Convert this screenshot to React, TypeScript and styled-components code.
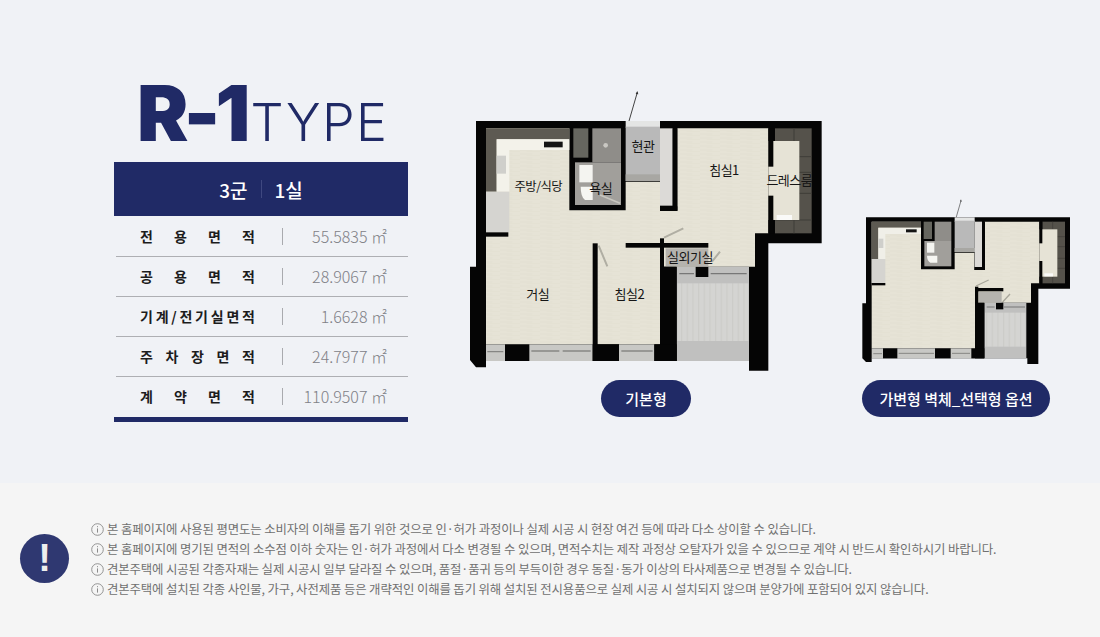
import React from "react";
import styled, { createGlobalStyle } from "styled-components";

const Global = createGlobalStyle`
  html, body { margin: 0; padding: 0; }
  body { width: 1100px; height: 637px; overflow: hidden; background: #f5f5f5; font-family: "Noto Sans CJK KR", "Noto Sans", sans-serif; }
`;

const Page = styled.div`
  width: 1100px;
  height: 637px;
  display: flex;
  flex-direction: column;
`;
const Top = styled.section`
  height: 483px;
  box-sizing: border-box;
  background: #f0f2f6;
  padding: 85px 0 0 114px;
  display: flex;
  align-items: flex-start;
`;
const Summary = styled.div`
  width: 294px;
  flex: none;
`;
const Title = styled.h1`
  margin: 0 0 21px;
  padding-left: 23px;
  height: 56px;
  line-height: 56px;
  display: flex;
  align-items: baseline;
  color: #202a66;
  font-family: Inter, "Liberation Sans", sans-serif;
  font-weight: 400;
  white-space: nowrap;
`;
const TitleBold = styled.span`
  font-size: 77px;
  font-weight: 900;
  letter-spacing: -4.8px;
`;
const TitleThin = styled.span`
  font-size: 52px;
  font-weight: 300;
  letter-spacing: 1.4px;
  margin-left: 5px;
`;
const Head = styled.div`
  height: 54px;
  background: #202a66;
  color: #fff;
  display: flex;
  align-items: center;
  justify-content: center;
  font-size: 19px;
  font-weight: 500;
`;
const HeadSep = styled.i`
  width: 1px;
  height: 18px;
  background: #3f4880;
  margin: 0 13px;
`;
const Table = styled.div`
  border-bottom: 5px solid #202a66;
  padding-top: 1px;
`;
const Row = styled.div`
  height: 40px;
  margin-left: 2px;
  box-sizing: border-box;
  display: flex;
  align-items: center;
  border-bottom: ${p => (p.$last ? "0" : "1px solid #aeafb3")};
  padding: 0 0 ${p => (p.$last ? "2px" : "1px")} 24px;
`;
const Label = styled.div`
  width: 115px;
  display: flex;
  justify-content: space-between;
  font-size: 14px;
  font-weight: 700;
  color: #1c1c1c;
`;
const Value = styled.div`
  flex: 1;
  margin-left: 27px;
  margin-right: 21px;
  height: 17px;
  line-height: 17px;
  border-left: 1px solid #a9aaae;
  text-align: right;
  color: #808187;
  font-size: 16px;
  font-weight: 300;
  white-space: nowrap;
`;
const PlanColumn = styled.div`
  flex: none;
  display: flex;
  flex-direction: column;
  align-items: center;
  margin-left: ${p => p.$left}px;
  margin-top: ${p => p.$top}px;
`;
const PlanSvg = styled.svg`
  display: block;
  font-family: "Noto Sans CJK KR", sans-serif;
`;
const Pill = styled.div`
  margin-top: 5px;
  height: 37px;
  width: ${p => p.$w}px;
  border-radius: 19px;
  background: #202a66;
  color: #fff;
  font-size: 15px;
  font-weight: 500;
  display: flex;
  align-items: center;
  justify-content: center;
  white-space: nowrap;
`;
const Notice = styled.section`
  flex: 1;
  background: #f5f5f5;
  display: flex;
  padding: 36px 0 0 20px;
`;
const Bang = styled.div`
  width: 49px;
  height: 49px;
  margin-top: 15px;
  border-radius: 50%;
  background: #2f3871;
  color: #eeeeee;
  font-family: "Liberation Sans", sans-serif;
  font-weight: 700;
  font-size: 38px;
  display: flex;
  align-items: center;
  justify-content: center;
  flex: none;
`;
const Lines = styled.div`
  margin-left: 22px;
`;
const Line = styled.p`
  margin: 0;
  height: 20px;
  line-height: 20px;
  font-size: 12.4px;
  letter-spacing: -0.12px;
  color: #707070;
  white-space: nowrap;
`;
const InfoSvg = styled.svg`
  vertical-align: -2px;
  margin-right: 3px;
`;

const rows: [string[], string][] = [
  [["전", "용", "면", "적"], "55.5835 ㎡"],
  [["공", "용", "면", "적"], "28.9067 ㎡"],
  [["기", "계", "/", "전", "기", "실", "면", "적"], "1.6628 ㎡"],
  [["주", "차", "장", "면", "적"], "24.7977 ㎡"],
  [["계", "약", "면", "적"], "110.9507 ㎡"],
];

const notes = [
  "본 홈페이지에 사용된 평면도는 소비자의 이해를 돕기 위한 것으로 인·허가 과정이나 실제 시공 시 현장 여건 등에 따라 다소 상이할 수 있습니다.",
  "본 홈페이지에 명기된 면적의 소수점 이하 숫자는 인·허가 과정에서 다소 변경될 수 있으며, 면적수치는 제작 과정상 오탈자가 있을 수 있으므로 계약 시 반드시 확인하시기 바랍니다.",
  "견본주택에 시공된 각종자재는 실제 시공시 일부 달라질 수 있으며, 품절·품귀 등의 부득이한 경우 동질·동가 이상의 타사제품으로 변경될 수 있습니다.",
  "견본주택에 설치된 각종 사인물, 가구, 사전제품 등은 개략적인 이해를 돕기 위해 설치된 전시용품으로 실제 시공 시 설치되지 않으며 분양가에 포함되어 있지 않습니다.",
];

const Wood = ({ id }: { id: string }) => (
  <defs>
    <pattern id={id} width="60" height="12" patternUnits="userSpaceOnUse">
      <rect width="60" height="12" fill="#e6e3d6" />
      <path d="M0 3h38M20 8h40" stroke="#e0ddcf" strokeWidth="1.5" />
    </pattern>
    <pattern id={id + "s"} width="17" height="12" patternUnits="userSpaceOnUse">
      <rect width="17" height="12" fill="#d4d4d2" />
      <path d="M2 0v12" stroke="#c4c4c2" strokeWidth="2" />
    </pattern>
  </defs>
);

const Room = ({ x, y, t, s = 39 }: { x: number; y: number; t: string; s?: number }) => (
  <text x={x} y={y} fontSize={s} fill="#151515" textAnchor="middle" letterSpacing={-1.5}>{t}</text>
);

const PlanBasic = () => (
  <PlanSvg width="372" height="290" viewBox="0 0 1116 870">
    <Wood id="w1" />
    <path d="M505 115L532 22" stroke="#444" strokeWidth="3" />
    <path d="M532 18l-5 9 8 1z" fill="#333" />
    <path d="M48 108H1085V475H925V857H867V828H78V847H48L30 825V545H48Z" fill="#050505" />
    <path d="M78 130H328V376H497V290H600V378H652V130H925V445H885V545H612V778H78Z" fill="url(#w1)" />
    <path d="M78 130H328V163H110V320H78Z" fill="#5d5a52" />
    <path d="M110 163H328V195H148V320H110Z" fill="#f3f2ea" />
    <rect x="252" y="170" width="56" height="17" fill="#141414" />
    <rect x="110" y="212" width="28" height="54" fill="#cfcfcb" />
    <rect x="78" y="320" width="70" height="122" fill="#d5d4d0" />
    <rect x="78" y="442" width="67" height="13" fill="#050505" />
    <rect x="340" y="130" width="45" height="88" fill="#66665f" />
    <rect x="397" y="130" width="86" height="102" fill="#8f8d89" />
    <circle cx="437" cy="181" r="7" fill="#c9c7c2" />
    <rect x="345" y="232" width="138" height="128" fill="#a19f9b" />
    <rect x="358" y="240" width="40" height="52" fill="#f4f4f0" />
    <path d="M362 305H398V345H375Q362 335 362 305Z" fill="#f6f6f2" />
    <path d="M420 330L480 355" stroke="#c8c6be" strokeWidth="5" />
    <rect x="497" y="108" width="103" height="20" fill="#e4e5e4" />
    <rect x="497" y="125" width="103" height="163" fill="#b9b9b9" />
    <rect x="497" y="268" width="103" height="20" fill="#a8a7a3" />
    <rect x="600" y="130" width="38" height="232" fill="#dcdad7" />
    <rect x="638" y="130" width="14" height="246" fill="#050505" />
    <rect x="600" y="364" width="52" height="14" fill="#050505" />
    <rect x="945" y="130" width="110" height="315" fill="#55524b" />
    <path d="M1002 130v38M1002 405v40M945 405H1055M1018 215H1055M1018 262H1055M1018 325H1055" stroke="#3f3d38" strokeWidth="3" />
    <rect x="925" y="168" width="93" height="237" fill="#e6e3d6" />
    <rect x="925" y="130" width="15" height="115" fill="#050505" />
    <rect x="925" y="332" width="15" height="113" fill="#050505" />
    <rect x="950" y="390" width="46" height="15" fill="#fafaf8" />
    <rect x="650" y="545" width="217" height="283" fill="#c0c0bf" />
    <rect x="652" y="595" width="213" height="173" fill="url(#w1s)" />
    <path d="M658 566H702M752 566H860" stroke="#777" strokeWidth="4" />
    <rect x="707" y="545" width="38" height="31" fill="#050505" />
    <rect x="617" y="490" width="128" height="55" fill="#b5b3ae" />
    <rect x="398" y="475" width="15" height="353" fill="#050505" />
    <rect x="497" y="474" width="248" height="14" fill="#050505" />
    <rect x="600" y="460" width="12" height="100" fill="#050505" />
    <rect x="600" y="545" width="50" height="283" fill="#050505" />
    <rect x="78" y="778" width="320" height="50" fill="#c8c8c5" />
    <rect x="477" y="778" width="106" height="50" fill="#c8c8c5" />
    <path d="M82 800H130M214 798H298M308 798H392M484 798H578" stroke="#868684" strokeWidth="4" />
    <rect x="135" y="778" width="73" height="50" fill="#050505" />
    <rect x="398" y="778" width="79" height="50" fill="#050505" />
    <rect x="583" y="778" width="67" height="50" fill="#050505" />
    <path d="M416 482L442 544M612 458L670 430M756 530L780 500" stroke="#b0aea3" strokeWidth="6" />
    <Room x={235} y={318} t="주방/식당" s={37} />
    <Room x={422} y={324} t="욕실" />
    <Room x={549} y={197} t="현관" />
    <Room x={792} y={270} t="침실1" />
    <Room x={988} y={300} t="드레스룸" />
    <Room x={690} y={530} t="실외기실" />
    <Room x={233} y={642} t="거실" />
    <Room x={508} y={642} t="침실2" />
  </PlanSvg>
);

const PlanOption = () => (
  <PlanSvg width="228" height="185" viewBox="-24 0 684 555">
    <Wood id="w2" />
    <path d="M318 84L333 32" stroke="#444" strokeWidth="2" />
    <path d="M333 28l-3 6 5 1z" fill="#333" />
    <path d="M48 82H660V296H565V522H532V505H65V516H48L37 505V340H48Z" fill="#050505" />
    <path d="M65 95H213V238H314V188H373V240H404V95H568V280H543V338H387V475H65Z" fill="url(#w2)" />
    <path d="M65 95H213V113H85V207H65Z" fill="#5d5a52" />
    <path d="M85 113H213V132H106V207H85Z" fill="#f0efe8" />
    <rect x="168" y="118" width="32" height="9" fill="#141414" />
    <rect x="85" y="146" width="15" height="28" fill="#cfcfcb" />
    <rect x="65" y="207" width="41" height="72" fill="#d5d4d0" />
    <rect x="65" y="279" width="41" height="7" fill="#050505" />
    <rect x="221" y="95" width="25" height="52" fill="#66665f" />
    <rect x="254" y="95" width="50" height="58" fill="#8f8d89" />
    <rect x="223" y="153" width="81" height="76" fill="#a19f9b" />
    <rect x="231" y="158" width="22" height="30" fill="#f4f4f0" />
    <path d="M231 197H262V218H241Q231 212 231 197Z" fill="#f6f6f2" />
    <rect x="314" y="82" width="60" height="13" fill="#e4e5e4" />
    <rect x="314" y="92" width="60" height="94" fill="#b9b9b9" />
    <rect x="314" y="174" width="60" height="12" fill="#a8a7a3" />
    <rect x="374" y="95" width="22" height="136" fill="#dcdad7" />
    <rect x="396" y="95" width="9" height="145" fill="#050505" />
    <rect x="374" y="231" width="30" height="9" fill="#050505" />
    <rect x="577" y="95" width="68" height="185" fill="#55524b" />
    <path d="M608 95v23M608 260v20M622 140H645M622 170H645M622 205H645M622 235H645" stroke="#3f3d38" strokeWidth="2" />
    <rect x="568" y="118" width="54" height="142" fill="#e6e3d6" />
    <rect x="568" y="95" width="9" height="65" fill="#050505" />
    <rect x="568" y="213" width="9" height="67" fill="#050505" />
    <rect x="583" y="250" width="26" height="9" fill="#fafaf8" />
    <rect x="403" y="338" width="126" height="167" fill="#c0c0bf" />
    <rect x="405" y="368" width="122" height="102" fill="url(#w2s)" />
    <path d="M410 351H434M462 351H525" stroke="#777" strokeWidth="3" />
    <rect x="438" y="338" width="22" height="20" fill="#050505" />
    <rect x="387" y="306" width="68" height="32" fill="#b5b3ae" />
    <rect x="375" y="294" width="85" height="10" fill="#050505" />
    <rect x="375" y="290" width="10" height="50" fill="#050505" />
    <rect x="375" y="338" width="28" height="167" fill="#050505" />
    <rect x="65" y="475" width="310" height="30" fill="#c8c8c5" />
    <path d="M70 491H96M146 490H252M306 490H360" stroke="#868684" strokeWidth="3" />
    <rect x="99" y="475" width="43" height="30" fill="#050505" />
    <rect x="255" y="475" width="47" height="30" fill="#050505" />
    <rect x="364" y="475" width="39" height="30" fill="#050505" />
    <path d="M378 288L416 270M458 336L480 312" stroke="#a9a79c" strokeWidth="4" />
  </PlanSvg>
);

const InfoMark = () => (
  <InfoSvg width="13" height="13" viewBox="0 0 13 13">
    <circle cx="6.5" cy="6.5" r="5.8" fill="none" stroke="#8a8a8a" strokeWidth="0.9" />
    <path d="M6.5 5.4v4.2M6.5 3.2v1" stroke="#8a8a8a" strokeWidth="1" />
  </InfoSvg>
);

export default function App() {
  return (
    <Page>
      <Global />
      <Top>
        <Summary>
          <Title>
            <TitleBold>R-1</TitleBold>
            <TitleThin>TYPE</TitleThin>
          </Title>
          <Head>
            <span>3군</span>
            <HeadSep />
            <span>1실</span>
          </Head>
          <Table>
            {rows.map(([chars, v], i) => (
              <Row key={i} $last={i === rows.length - 1}>
                <Label>
                  {chars.map((c, j) => (
                    <span key={j}>{c}</span>
                  ))}
                </Label>
                <Value>{v}</Value>
              </Row>
            ))}
          </Table>
        </Summary>
        <PlanColumn $left={52} $top={0}>
          <PlanBasic />
          <Pill $w={90}>기본형</Pill>
        </PlanColumn>
        <PlanColumn $left={10} $top={105}>
          <PlanOption />
          <Pill $w={188}>가변형 벽체_선택형 옵션</Pill>
        </PlanColumn>
      </Top>
      <Notice>
        <Bang>!</Bang>
        <Lines>
          {notes.map((n, i) => (
            <Line key={i}>
              <InfoMark />
              {n}
            </Line>
          ))}
        </Lines>
      </Notice>
    </Page>
  );
}
